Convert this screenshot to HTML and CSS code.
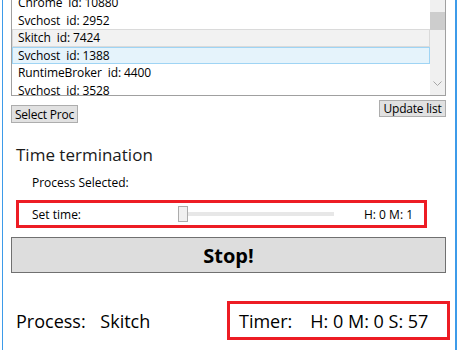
FILE: index.html
```html
<!DOCTYPE html>
<html lang="en">
<head>
    <meta charset="UTF-8">
    <meta name="viewport" content="width=device-width, initial-scale=1.0">
    <title>Process Killer</title>
    <link rel="stylesheet" href="styles.css">
</head>
<body>
    <div class="window">
        <div class="proc-list">
            <div class="proc-rows">
                <div class="proc-row">Chrome&nbsp; id: 10880</div>
                <div class="proc-row">Svchost&nbsp; id: 2952</div>
                <div class="proc-row hovered">Skitch&nbsp; id: 7424</div>
                <div class="proc-row selected">Svchost&nbsp; id: 1388</div>
                <div class="proc-row">RuntimeBroker&nbsp; id: 4400</div>
                <div class="proc-row">Svchost&nbsp; id: 3528</div>
            </div>
            <div class="scrollbar">
                <div class="scroll-thumb"></div>
                <svg class="scroll-arrow" width="9" height="6" viewBox="0 0 9 6">
                    <polyline points="0.5,0.5 4.5,4.5 8.5,0.5" fill="none" stroke="#a6a6a6" stroke-width="1"/>
                </svg>
            </div>
        </div>

        <div class="list-actions">
            <button class="btn btn-select">Select Proc</button>
            <button class="btn btn-update">Update list</button>
        </div>

        <h2 class="section-title">Time termination</h2>
        <div class="selected-label">Process Selected:</div>

        <div class="set-time highlight">
            <span class="set-time-label">Set time:</span>
            <div class="slider">
                <div class="slider-thumb"></div>
                <div class="slider-track"></div>
            </div>
            <span class="time-value">H: 0 M: 1</span>
        </div>

        <button class="stop-btn">Stop!</button>

        <div class="status">
            <div class="process-info">
                <span class="status-label">Process:</span>
                <span class="status-value">Skitch</span>
            </div>
            <div class="timer highlight">
                <span class="status-label">Timer:</span>
                <span class="status-value">H: 0 M: 0 S: 57</span>
            </div>
        </div>
    </div>
</body>
</html>
```

FILE: styles.css
```css
body {
    margin: 0;
    background-color: #ffffff;
    font-family: 'Open Sans', 'Noto Sans', sans-serif;
    color: #000000;
    overflow: hidden;
}
.window {
    margin-left: 2px;
    width: 435px;
    height: 350px;
    padding: 0 9px 0 8px;
    border-left: 1px solid #3d9be9;
    border-right: 2px solid #3d9be9;
    overflow: hidden;
}

/* process list */
.proc-list {
    display: flex;
    margin-top: -7px;
    height: 101px;
    border: 1px solid #a0a0a0;
    overflow: hidden;
}
.proc-rows {
    flex: 1;
}
.proc-row {
    height: 15.5px;
    line-height: 15px;
    padding-left: 5px;
    border: 1px solid transparent;
    font-size: 12px;
    letter-spacing: -0.1px;
    white-space: nowrap;
}
.proc-row.hovered {
    background-color: #f2f2f2;
    border-color: #dadada;
}
.proc-row.selected {
    background-color: #e5f3fb;
    border-color: #9fd4f4;
}
.scrollbar {
    width: 15px;
    background-color: #f0f0f0;
    display: flex;
    flex-direction: column;
    align-items: center;
}
.scroll-thumb {
    width: 15px;
    height: 18px;
    margin-top: 18px;
    background-color: #cdcdcd;
}
.scroll-arrow {
    margin-top: auto;
    margin-bottom: 8px;
}

/* buttons */
.list-actions {
    display: flex;
    justify-content: space-between;
    align-items: flex-start;
}
.btn {
    font-family: inherit;
    font-size: 12px;
    letter-spacing: -0.2px;
    color: #000000;
    background-color: #e1e1e1;
    border: 1px solid #adadad;
    padding: 0;
    line-height: 15px;
    white-space: nowrap;
}
.btn-select {
    margin-top: 9px;
    height: 18px;
    width: 67px;
}
.btn-update {
    margin-top: 4px;
    height: 17px;
    width: 67px;
}

/* time termination */
.section-title {
    margin: 22px 0 0 5px;
    font-size: 17px;
    font-weight: normal;
    line-height: 20px;
    color: #1a1a1a;
}
.selected-label {
    margin: 10px 0 0 21px;
    font-size: 12px;
    line-height: 16px;
}
.highlight {
    border: 3px solid #ed1c24;
}
.set-time {
    display: flex;
    align-items: center;
    margin: 9px 0 0 5px;
    width: 405px;
    height: 22px;
    font-size: 12px;
}
.set-time-label {
    margin-left: 13px;
    width: 146px;
}
.slider {
    display: flex;
    align-items: center;
    width: 156px;
    height: 16px;
}
.slider-thumb {
    width: 8px;
    height: 14px;
    background-color: #f0f0f0;
    border: 1px solid #acacac;
}
.slider-track {
    width: 146px;
    height: 4px;
    background-color: #e7e7e7;
}
.time-value {
    margin-left: 30px;
}
.stop-btn {
    display: block;
    width: 100%;
    height: 36px;
    margin-top: 9px;
    font-family: inherit;
    font-size: 20px;
    font-weight: bold;
    background-color: #dddddd;
    border: 1px solid #707070;
}

/* status */
.status {
    display: flex;
    justify-content: space-between;
    align-items: center;
    margin-top: 28px;
    margin-right: -4px;
    font-size: 18px;
}
.process-info {
    margin-left: 5px;
}
.status-label {
    margin-right: 10px;
}
.timer {
    width: 208px;
    height: 33px;
    display: flex;
    align-items: center;
    padding-left: 9px;
}
.timer .status-label {
    margin-right: 18px;
}
```
